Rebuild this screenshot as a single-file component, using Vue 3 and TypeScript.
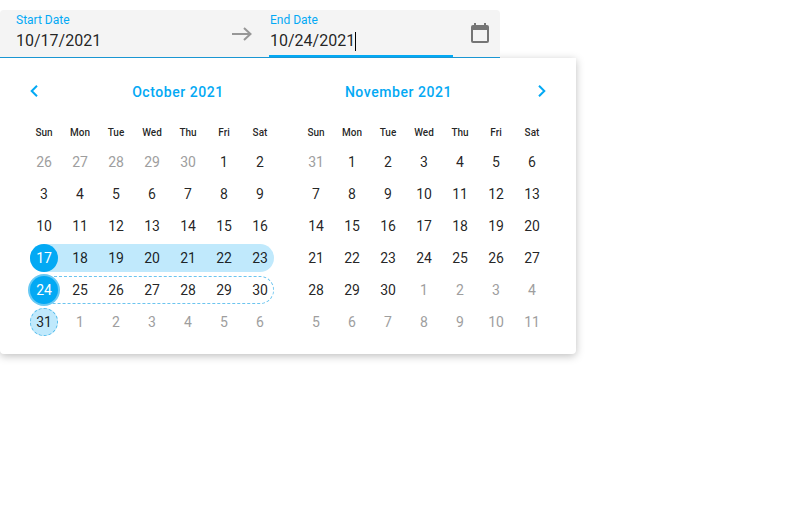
<script setup lang="ts">
interface Day { n: number; other: boolean }
interface Month { title: string; weeks: Day[][] }

const weekdays = ['Sun', 'Mon', 'Tue', 'Wed', 'Thu', 'Fri', 'Sat']

function buildMonth(title: string, year: number, month: number): Month {
  const offset = new Date(year, month, 1).getDay()
  const weeks: Day[][] = []
  for (let w = 0; w < 6; w++) {
    const row: Day[] = []
    for (let d = 0; d < 7; d++) {
      const date = new Date(year, month, 1 - offset + w * 7 + d)
      row.push({ n: date.getDate(), other: date.getMonth() !== month })
    }
    weeks.push(row)
  }
  return { title, weeks }
}

const months: Month[] = [
  buildMonth('October 2021', 2021, 9),
  buildMonth('November 2021', 2021, 10),
]

function weekClass(m: number, w: number): string {
  if (m !== 0) return ''
  return ['', '', '', 'selected', 'preview', 'tail'][w]
}
</script>

<template>
  <div class="page">
    <div class="field">
      <div class="input start">
        <span class="label">Start Date</span>
        <span class="value">10/17/2021</span>
      </div>
      <svg class="arrow" width="20" height="14" viewBox="0 0 20 14">
        <path d="M0 7H18.5M12 .9L18.5 7L12 13.1" fill="none" stroke="#979797" stroke-width="2" />
      </svg>
      <div class="input end">
        <span class="label">End Date</span>
        <span class="value">10/24/2021<i class="caret"></i></span>
      </div>
      <svg class="calendar-icon" width="18" height="20" viewBox="0 0 18 20">
        <path fill="#757575" fill-rule="evenodd" d="M3 0h2v2h8V0h2v2h1a2 2 0 0 1 2 2v14a2 2 0 0 1-2 2H2a2 2 0 0 1-2-2V4a2 2 0 0 1 2-2h1zM2 7v11h14V7z" />
      </svg>
    </div>
    <div class="popup">
      <section v-for="(month, m) in months" :key="month.title" class="month">
        <header class="head">
          <svg v-if="m === 0" class="prev" width="8" height="12" viewBox="0 0 8 12">
            <path d="M7 .8L1.7 6L7 11.2" fill="none" stroke="#03a9f4" stroke-width="2" />
          </svg>
          <span class="title">{{ month.title }}</span>
          <svg v-if="m === 1" class="next" width="8" height="12" viewBox="0 0 8 12">
            <path d="M1 .8L6.3 6L1 11.2" fill="none" stroke="#03a9f4" stroke-width="2" />
          </svg>
        </header>
        <div class="row names">
          <span v-for="name in weekdays" :key="name">{{ name }}</span>
        </div>
        <div v-for="(week, w) in month.weeks" :key="w" class="row week" :class="weekClass(m, w)">
          <span v-for="(day, d) in week" :key="d" class="cell" :class="{ other: day.other }">
            <b class="num">{{ day.n }}</b>
          </span>
        </div>
      </section>
    </div>
  </div>
</template>

<style>
body { background: #fff; }
</style>

<style scoped>
.page {
  box-sizing: border-box;
  height: 510px;
  padding-top: 10px;
  font-family: Roboto, sans-serif;
  color: rgba(0, 0, 0, 0.87);
  overflow: hidden;
}
.field {
  box-sizing: border-box;
  position: relative;
  z-index: 1;
  display: flex;
  width: 500px;
  height: 48px;
  background: #f4f4f4;
  border-bottom: 1px solid #1a96d2;
  border-radius: 4px 4px 0 0;
}
.input {
  box-sizing: border-box;
  display: flex;
  flex-direction: column;
}
.start { width: 232px; padding-left: 16px; }
.end {
  width: 184px;
  margin-left: 17px;
  padding-left: 1px;
  border-bottom: 2px solid #03a9f4;
}
.label {
  margin-top: 2px;
  font-size: 12px;
  line-height: 16px;
  color: #03a9f4;
}
.value {
  display: flex;
  align-items: center;
  margin-top: 3px;
  font-size: 16px;
  line-height: 20px;
}
.caret { width: 1px; height: 19px; background: #000; }
.arrow { margin-top: 17px; }
.calendar-icon { margin: 13px 0 0 18px; }
.popup {
  box-sizing: border-box;
  display: flex;
  gap: 20px;
  width: 576px;
  height: 296px;
  padding: 0 26px;
  background: #fff;
  border-radius: 0 0 4px 4px;
  box-shadow: 0 2px 8px rgba(0, 0, 0, 0.26);
}
.month {
  display: flex;
  flex-direction: column;
  width: 252px;
}
.head {
  display: flex;
  align-items: center;
  height: 68px;
}
.title {
  flex: 1;
  text-align: center;
  font-size: 14px;
  font-weight: 500;
  letter-spacing: 0.56px;
  color: #03a9f4;
}
.prev { margin: 0 -12px 2px 4px; }
.next { margin: 0 4px 2px -12px; }
.month:first-child .title { padding-left: 52px; }
.month:last-child .title { padding-right: 51px; }
.row { display: flex; }
.names {
  height: 20px;
  font-size: 10px;
  font-weight: 500;
  line-height: 13px;
}
.names span { width: 36px; text-align: center; }
.week { height: 32px; }
.cell {
  display: flex;
  align-items: center;
  justify-content: center;
  width: 36px;
}
.num {
  box-sizing: border-box;
  width: 28px;
  height: 28px;
  font-size: 14px;
  font-weight: 400;
  line-height: 28px;
  text-align: center;
  border-radius: 50%;
}
.other .num { color: #9e9e9e; }
.selected, .preview {
  box-sizing: border-box;
  width: 244px;
  height: 28px;
  margin: 2px 4px;
  border-radius: 14px;
}
.selected { background: #c0e9fc; }
.selected .cell, .preview .cell { flex: 0 0 36px; }
.selected .cell:first-child { margin-left: -4px; }
.preview { border: 1px dashed #6bc4ef; }
.preview .cell { height: 26px; }
.preview .cell:first-child { margin-left: -5px; }
.selected .cell:first-child .num, .preview .cell:first-child .num {
  flex: none;
  color: #fff;
  background: #03a9f4;
}
.preview .cell:first-child .num { box-shadow: 0 0 0 2px #68c9f4; }
.tail .cell:first-child .num {
  line-height: 26px;
  background: #c0e9fc;
  border: 1px dashed #55bdec;
}
</style>
